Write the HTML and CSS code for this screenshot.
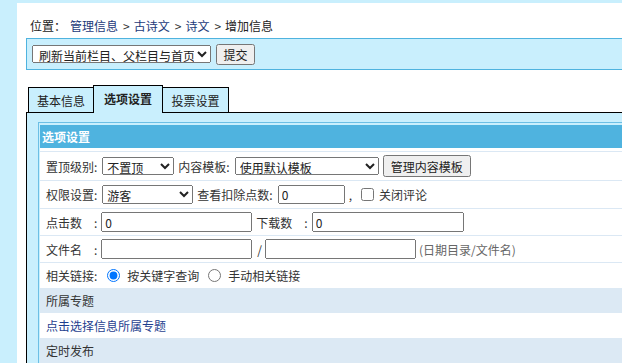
FILE: index.html
```html
<!DOCTYPE html>
<html lang="zh-CN">
<head>
  <meta charset="UTF-8">
  <meta name="viewport" content="width=device-width, initial-scale=1.0">
  <title>增加信息</title>
  <link rel="stylesheet" href="styles.css">
</head>
<body>

  <div class="main">
    <div class="crumb">位置：<a href="#">管理信息</a><span class="sep">&gt;</span><a href="#">古诗文</a><span class="sep">&gt;</span><a href="#">诗文</a><span class="sep">&gt;</span>增加信息</div>

    <div class="toolbar">
      <select class="sel-refresh">
        <option>刷新当前栏目、父栏目与首页</option>
      </select>
      <button type="button" class="btn-submit">提交</button>
    </div>

    <div class="tabs">
      <span class="tab tab-base">基本信息</span>
      <span class="tab tab-opt active">选项设置</span>
      <span class="tab tab-vote">投票设置</span>
    </div>

    <div class="panel">
      <div class="tbl">
        <div class="tbl-head">选项设置</div>
        <div class="tbl-body">

          <div class="row row-1">
            <span class="lbl">置顶级别:</span>
            <select class="sel-top"><option>不置顶</option></select>
            <span class="lbl gap4">内容模板:</span>
            <select class="sel-tpl"><option>使用默认模板</option></select>
            <button type="button" class="btn-tpl">管理内容模板</button>
          </div>

          <div class="row row-2">
            <span class="lbl">权限设置:</span>
            <select class="sel-group"><option>游客</option></select>
            <span class="lbl gap4">查看扣除点数:</span>
            <input type="text" class="inp-fen" value="0">
            <span class="gap4">,</span>
            <input type="checkbox" class="chk">
            <span class="gap5">关闭评论</span>
          </div>

          <div class="row">
            <span class="lbl">点击数　:</span>
            <input type="text" class="inp-wide" value="0">
            <span class="lbl gap4">下载数　:</span>
            <input type="text" class="inp-wide inp-down" value="0">
          </div>

          <div class="row">
            <span class="lbl">文件名　:</span>
            <input type="text" class="inp-wide">
            <span class="slash">/</span>
            <input type="text" class="inp-name">
            <span class="hint">(日期目录/文件名)</span>
          </div>

          <div class="row row-5">
            <span class="lbl">相关链接:</span>
            <input type="radio" name="link" class="radio radio-first" checked>
            <span class="radio-text">按关键字查询</span>
            <input type="radio" name="link" class="radio">
            <span class="radio-text">手动相关链接</span>
          </div>

          <div class="row-sub alt">所属专题</div>
          <div class="row-sub"><a href="#" class="link">点击选择信息所属专题</a></div>
          <div class="row-sub alt">定时发布</div>

        </div>
      </div>
    </div>
  </div>

</body>
</html>
```

FILE: styles.css
```css
body {
  margin: 0;
  background-color: #c9effd;
  font-family: "Noto Sans CJK SC", "Liberation Sans", sans-serif;
  font-size: 12px;
  color: #333;
  overflow: hidden;
}

select, input, button {
  font-family: inherit;
  font-size: 12px;
  margin: 0;
  box-sizing: border-box;
  color: #222;
}

.main {
  margin: 3px 0 0 17px;
  width: 720px;
  min-height: 420px;
  padding: 14px 0 0 9px;
  box-sizing: border-box;
  background-color: #fff;
}

/* breadcrumb */
.crumb {
  height: 17px;
  line-height: 17px;
  padding-left: 4px;
  color: #222;
}

.crumb a {
  color: #1c3a7a;
  text-decoration: none;
  margin-left: 4px;
}

.crumb .sep {
  margin: 0 4px 0 5px;
  color: #333;
}

.crumb .sep + a {
  margin-left: 0;
}

/* refresh toolbar */
.toolbar {
  margin-top: 4px;
  height: 32px;
  box-sizing: border-box;
  border: 1px solid #4fb3df;
  background-color: #c9effd;
  display: flex;
  align-items: center;
  padding-left: 5px;
}

.sel-refresh {
  width: 179px;
  height: 18px;
  padding: 0 0 0 2px;
}

.btn-submit {
  margin-left: 5px;
  width: 39px;
  height: 21px;
  padding: 0;
}

/* tabs */
.tabs {
  display: flex;
  align-items: flex-end;
  height: 27px;
  margin-top: 15px;
  padding-left: 2px;
}

.tab {
  height: 25px;
  box-sizing: border-box;
  border: 1px solid #000;
  border-bottom: none;
  background-color: #c9effd;
  margin-right: -1px;
  display: flex;
  align-items: center;
  justify-content: center;
  color: #222;
}

.tab-base { width: 66px; }
.tab-opt { width: 70px; }
.tab-vote { width: 67px; }

.tab.active {
  height: 28px;
  margin-bottom: -1px;
  padding-bottom: 3px;
  font-weight: bold;
  position: relative;
  z-index: 1;
}

/* panel */
.panel {
  border: 1px solid #000;
  background-color: #c9effd;
  padding: 9px 0 0 11px;
}

.tbl {
  border: 1px solid #6cbfe5;
  border-right: none;
  border-bottom: none;
  padding: 2px 0 0 1px;
}

.tbl-head {
  height: 23px;
  line-height: 23px;
  padding-left: 2px;
  background-color: #4fb3df;
  color: #fff;
  font-weight: bold;
}

.tbl-body {
  background-color: #fff;
  padding-top: 3px;
}

.row {
  display: flex;
  align-items: center;
  height: 27px;
  box-sizing: border-box;
  padding-left: 6px;
  border-top: 1px solid #dbe8f4;
  white-space: nowrap;
}

.row-1 { height: 29px; }
.row-2 { height: 28px; }
.row-5 { height: 26px; }

.row-sub {
  height: 25px;
  line-height: 25px;
  padding-left: 6px;
}

.row-sub.alt {
  background-color: #dce9f4;
}

.link {
  color: #1f3f8f;
  text-decoration: none;
}

.lbl {
  display: inline-block;
  min-width: 51px;
}

.gap4 { margin-left: 4px; }
.gap5 { margin-left: 5px; }

/* row 1 */
.sel-top {
  margin-left: 5px;
  width: 72px;
  height: 18px;
}

.sel-tpl {
  margin-left: 5px;
  width: 144px;
  height: 18px;
}

.btn-tpl {
  margin-left: 4px;
  width: 88px;
  height: 22px;
  padding: 0;
}

/* row 2 */
.sel-group {
  margin-left: 5px;
  width: 91px;
  height: 19px;
}

.inp-fen {
  margin-left: 5px;
  width: 67px;
  height: 19px;
  padding: 1px 2px;
}

.chk {
  margin: 0 0 0 9px;
  width: 13px;
  height: 13px;
}

/* rows 3, 4 */
.inp-wide {
  margin-left: 4px;
  width: 151px;
  height: 20px;
  padding: 1px 2px;
}

.inp-down {
  width: 152px;
}

.slash {
  margin: 0 3px 0 5px;
}

.inp-name {
  width: 151px;
  height: 20px;
  padding: 1px 2px;
}

.hint {
  margin-left: 3px;
  color: #666;
}

/* row 5 */
.radio {
  margin: 0 0 0 9px;
  width: 13px;
  height: 13px;
}

.radio-first {
  margin-left: 10px;
}

.radio-text {
  margin-left: 7px;
}
```
